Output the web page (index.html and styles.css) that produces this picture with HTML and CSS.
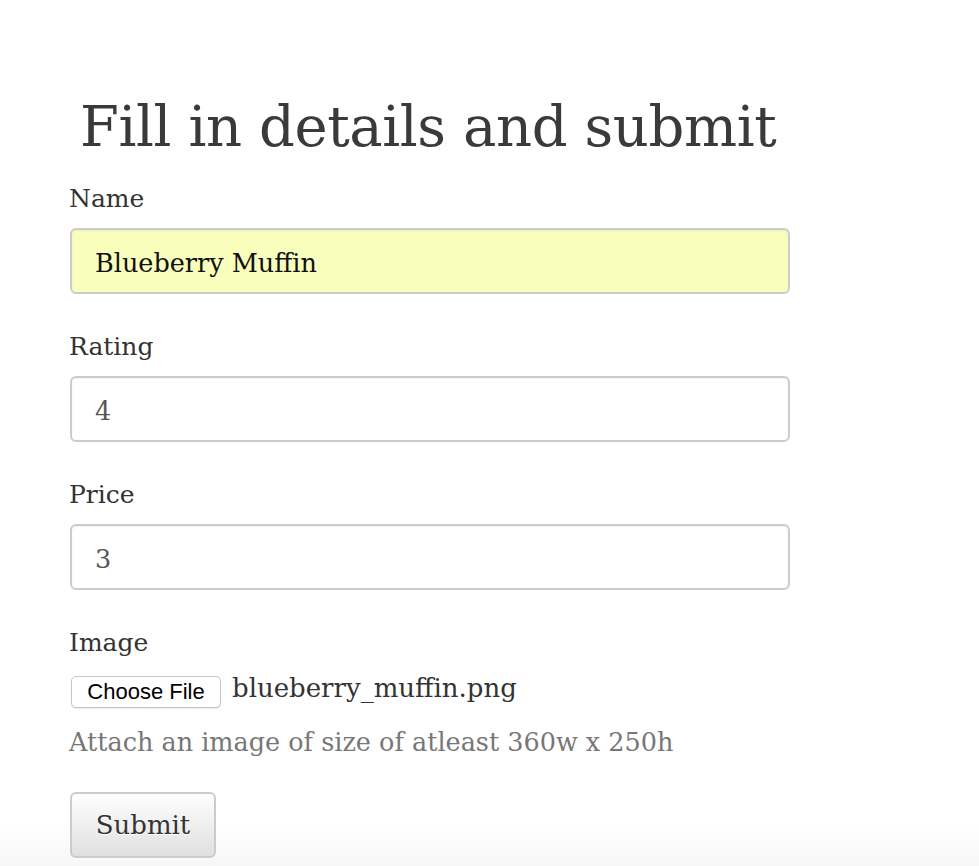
FILE: index.html
```html
<!DOCTYPE html>
<html lang="en">
<head>
<meta charset="utf-8">
<title>Fill in details and submit</title>
<link rel="stylesheet" href="styles.css">
</head>
<body>
<main class="page">
  <h1 class="title">Fill in details and submit</h1>
  <form class="form">
    <div class="field">
      <label class="label" for="name">Name</label>
      <input class="input input-autofill" id="name" type="text" value="Blueberry Muffin">
    </div>
    <div class="field">
      <label class="label" for="rating">Rating</label>
      <input class="input input-muted" id="rating" type="text" value="4">
    </div>
    <div class="field">
      <label class="label" for="price">Price</label>
      <input class="input input-muted" id="price" type="text" value="3">
    </div>
    <div class="field field-image">
      <label class="label">Image</label>
      <div class="file-row">
        <button type="button" class="file-btn">Choose File</button>
        <span class="file-name">blueberry_muffin.png</span>
      </div>
      <p class="help">Attach an image of size of atleast 360w x 250h</p>
    </div>
    <div class="actions">
      <button type="button" class="submit">Submit</button>
    </div>
  </form>
</main>
</body>
</html>
```
FILE: styles.css
```css
html {
  min-height: 100%;
  background: linear-gradient(to bottom, #ffffff 0, #ffffff calc(100% - 45px), #f7f7f7 100%);
}
body {
  margin: 0;
  min-height: 866px;
  font-family: "DejaVu Serif", "Liberation Serif", serif;
  color: #333333;
}
.page {
  padding: 87px 0 0 70px;
  width: 720px;
}
.title {
  margin: 0 0 17px 10px;
  font-size: 56px;
  line-height: 80px;
  font-weight: normal;
  color: #3a3a3a;
  letter-spacing: -0.4px;
}
.form {
  display: flex;
  flex-direction: column;
}
.field {
  display: flex;
  flex-direction: column;
  margin-bottom: 38px;
}
.label {
  display: block;
  font-size: 25px;
  line-height: 30px;
  margin-bottom: 14px;
  color: #333333;
  margin-left: -1px;
}
.input {
  box-sizing: border-box;
  width: 720px;
  height: 66px;
  border: 2px solid #cccccc;
  border-radius: 6px;
  padding: 4px 23px 0;
  font-family: "DejaVu Serif", "Liberation Serif", serif;
  font-size: 25.5px;
  background: #ffffff;
  box-shadow: inset 0 1px 2px rgba(0, 0, 0, 0.06);
  outline: none;
}
.input-autofill {
  background: #fafebd;
  color: #111111;
}
.input-muted {
  color: #555555;
}
.field-image {
  margin-bottom: 35px;
}
.field-image .label {
  margin-bottom: 18px;
}
.file-row {
  display: flex;
  align-items: center;
  gap: 11px;
  height: 32px;
}
.file-btn {
  box-sizing: border-box;
  height: 32px;
  width: 150px;
  margin-left: 1px;
  padding: 0;
  border: 1px solid #c4c4c4;
  border-radius: 5px;
  background: #ffffff;
  font-family: "Liberation Sans", Arial, sans-serif;
  font-size: 22px;
  color: #000000;
  box-shadow: 0 1px 1px rgba(0, 0, 0, 0.08);
}
.file-name {
  font-size: 26px;
  line-height: 32px;
  color: #333333;
  margin-top: -8px;
}
.help {
  margin: 19px 0 0 -1px;
  font-size: 25.5px;
  line-height: 30px;
  color: #777777;
}
.actions {
  display: flex;
}
.submit {
  box-sizing: border-box;
  width: 146px;
  height: 66px;
  border: 2px solid #cccccc;
  border-radius: 6px;
  background: linear-gradient(to bottom, #ffffff 0%, #e0e0e0 100%);
  font-family: "DejaVu Serif", "Liberation Serif", serif;
  font-size: 26px;
  color: #333333;
  text-shadow: 0 1px 0 #ffffff;
  padding: 0;
}
```
